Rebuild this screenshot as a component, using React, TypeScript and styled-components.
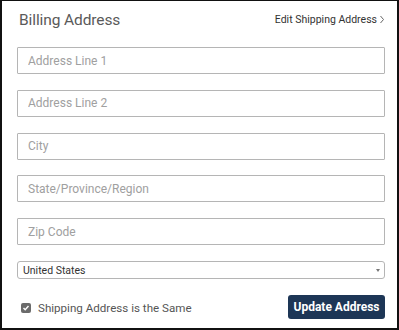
import React from "react";
import styled, { createGlobalStyle } from "styled-components";

const Global = createGlobalStyle`
  html, body { margin: 0; padding: 0; background: #fff; }
  body { font-family: Roboto, "Liberation Sans", Arial, sans-serif; }
  * { box-sizing: border-box; }
`;

const Frame = styled.div`
  width: 399px;
  height: 330px;
  border-style: solid;
  border-color: #111;
  border-width: 1px 2px 2px 2px;
  padding: 9px 12px 0 15px;
  display: flex;
  flex-direction: column;
`;

const Header = styled.div`
  display: flex;
  align-items: center;
  justify-content: space-between;
  height: 20px;
  margin-bottom: 17px;
`;

const Title = styled.h1`
  margin: 0 0 0 2px;
  font-size: 15.5px;
  font-weight: 400;
  color: #5a5a5a;
  letter-spacing: -0.1px;
`;

const EditLink = styled.a`
  font-size: 10.5px;
  color: #333;
  text-decoration: none;
  display: flex;
  align-items: center;
  gap: 2px;
  margin-top: -2px;
`;

const Fields = styled.div`
  display: flex;
  flex-direction: column;
  gap: 15.8px;
`;

const TextInput = styled.input`
  width: 368px;
  height: 27px;
  border: 1px solid #b5b5b5;
  border-radius: 1px;
  padding: 0 10px;
  font-family: Roboto, "Liberation Sans", Arial, sans-serif;
  font-size: 12px;
  color: #333;
  outline: none;
  &::placeholder { color: #a0a0a0; }
`;

const SelectBox = styled.div`
  width: 368px;
  height: 18px;
  margin-top: 16px;
  border: 1px solid #b5b5b5;
  border-radius: 3px;
  display: flex;
  align-items: center;
  justify-content: space-between;
  padding: 0 4px 0 5px;
  font-size: 10.5px;
  color: #333;
`;

const Arrow = styled.span`
  width: 0;
  height: 0;
  border-left: 2px solid transparent;
  border-right: 2px solid transparent;
  border-top: 3px solid #777;
`;

const Footer = styled.div`
  display: flex;
  align-items: center;
  justify-content: space-between;
  margin-top: 16px;
  width: 368px;
`;

const CheckLabel = styled.label`
  display: flex;
  align-items: center;
  gap: 7px;
  font-size: 11.6px;
  color: #555;
  padding-left: 4px;
  margin-top: 2px;
`;

const CheckBox = styled.span`
  width: 10px;
  height: 10px;
  border-radius: 2px;
  background: #6b6b6b;
  display: flex;
  align-items: center;
  justify-content: center;
`;

const Button = styled.button`
  width: 97px;
  height: 24px;
  border: none;
  border-radius: 3px;
  background: #1d3656;
  color: #fff;
  font-family: Roboto, "Liberation Sans", Arial, sans-serif;
  font-size: 12px;
  font-weight: 700;
  padding: 0;
`;

export default function App() {
  return (
    <>
      <Global />
      <Frame>
        <Header>
          <Title>Billing Address</Title>
          <EditLink href="#">
            Edit Shipping Address
            <svg width="6" height="9" viewBox="0 0 6 9">
              <path d="M1.5 1 L4.5 4.5 L1.5 8" fill="none" stroke="#666" strokeWidth="1" />
            </svg>
          </EditLink>
        </Header>
        <Fields>
          <TextInput placeholder="Address Line 1" />
          <TextInput placeholder="Address Line 2" />
          <TextInput placeholder="City" />
          <TextInput placeholder="State/Province/Region" />
          <TextInput placeholder="Zip Code" />
        </Fields>
        <SelectBox>
          <span>United States</span>
          <Arrow />
        </SelectBox>
        <Footer>
          <CheckLabel>
            <CheckBox>
              <svg width="8" height="8" viewBox="0 0 8 8">
                <path d="M1.5 4 L3.2 5.8 L6.5 2" fill="none" stroke="#fff" strokeWidth="1.4" />
              </svg>
            </CheckBox>
            Shipping Address is the Same
          </CheckLabel>
          <Button>Update Address</Button>
        </Footer>
      </Frame>
    </>
  );
}
